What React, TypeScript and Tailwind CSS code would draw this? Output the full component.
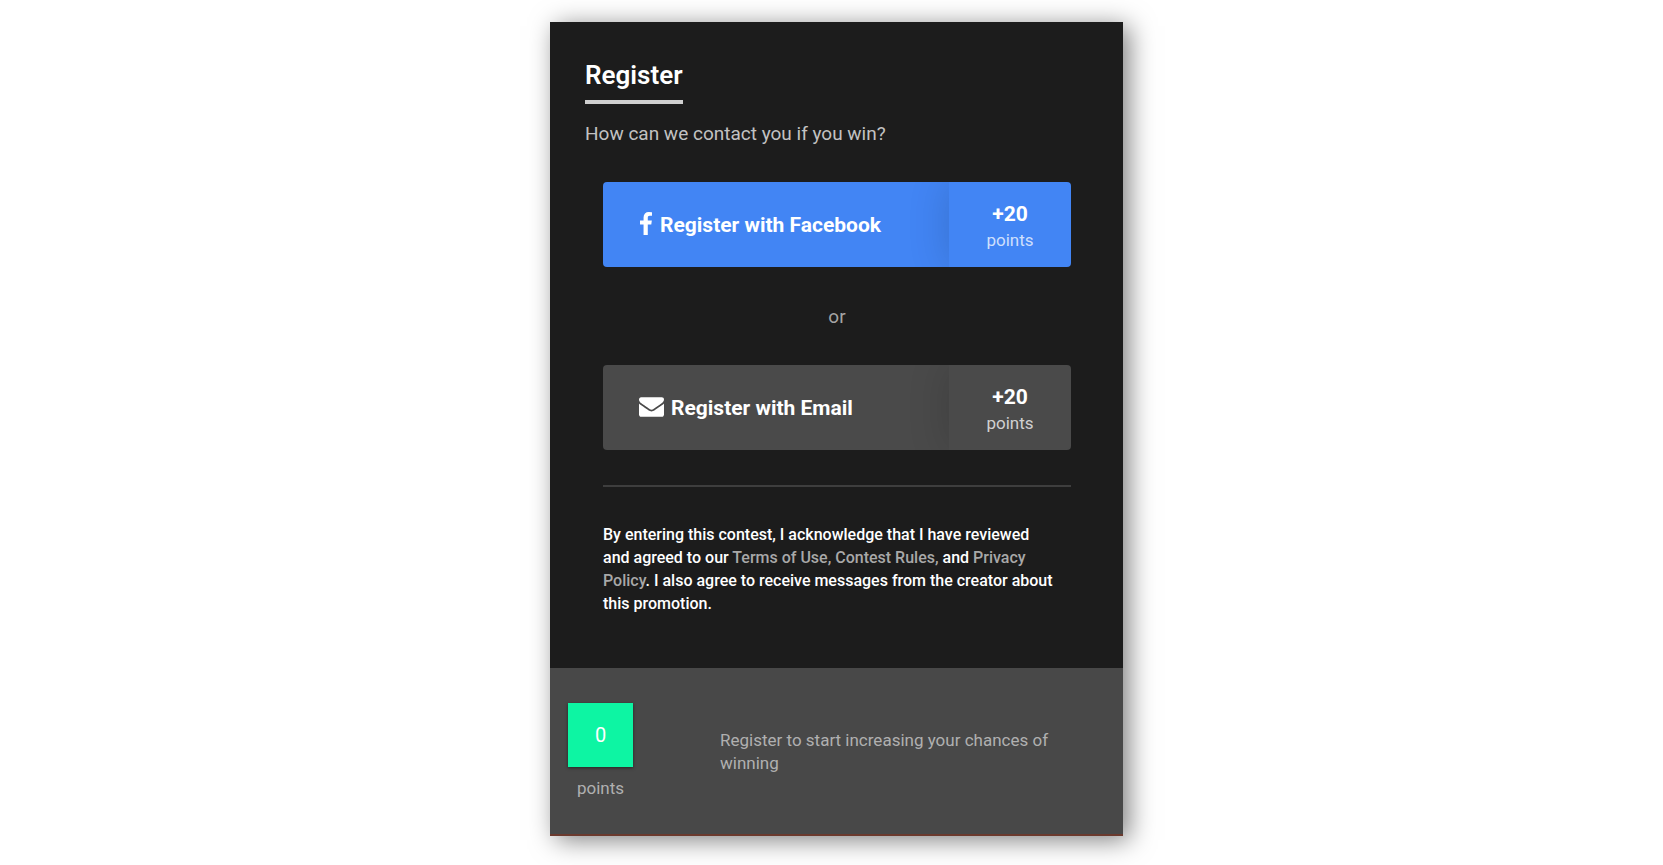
import type { ReactNode } from 'react'

function FacebookIcon() {
  return (
    <svg className="mb-1 h-[23px] w-3.5" fill="currentColor" viewBox="95 128 864 1664">
      <path d="M959 140v264H802q-86 0-116 36t-30 108v189h293l-39 296H656v759H350v-759H95V737h255V519q0-186 104-288.500T731 128q147 0 228 12z" />
    </svg>
  )
}

function EnvelopeIcon() {
  return (
    <svg className="mb-1 h-5 w-[25px]" fill="currentColor" viewBox="0 256 1792 1408">
      <path d="M1792 710v794q0 66-47 113t-113 47H160q-66 0-113-47T0 1504V710q44 49 101 87 362 246 497 345 57 42 92 65t95 48 110 25h2q51 0 110-25t95-48 92-65q170-123 498-345 57-39 100-87z" />
      <path d="M1792 416q0 79-49 151t-122 123q-376 261-468 325-10 7-42 31t-54 38-52 32-57 27-50 9h-2q-23 0-50-9t-57-27-52-32-54-38-42-31q-91-64-262-182T174 690q-62-42-117-115T0 438q0-78 41-130t119-52h1472q65 0 112 47t48 113z" />
    </svg>
  )
}

interface RegisterButtonProps {
  icon: ReactNode
  label: string
  points: number
  className: string
}

function RegisterButton({ icon, label, points, className }: RegisterButtonProps) {
  return (
    <button
      type="button"
      className={`flex w-full h-[85px] items-stretch rounded text-left overflow-hidden cursor-pointer ${className}`}
    >
      <span className="flex flex-1 items-center gap-[7px] pt-0.5 pl-9 text-[21px] font-bold text-white">
        {icon}
        {label}
      </span>
      <span className="flex w-[122px] flex-col items-center justify-center pt-1 shadow-[0_0_42px_rgba(0,0,0,0.16)]">
        <span className="text-[21px] leading-[26px] font-bold text-white">+{points}</span>
        <span className="text-[17px] leading-[26px] text-white/75">points</span>
      </span>
    </button>
  )
}

export default function App() {
  return (
    <div className="min-h-screen bg-white pt-[22px] pb-[30px] pl-[10px] font-[Roboto,'Liberation_Sans',sans-serif]">
      <main className="mx-auto w-full max-w-[573px] bg-[#1c1c1c] shadow-[6px_4px_24px_rgba(0,0,0,0.5)]">
        <section className="px-[35px] pt-9 pb-[53px]">
          <h1 className="inline-block border-b-4 border-[#cfcfcf] pb-2 text-[26px] leading-[34px] font-semibold text-white">
            Register
          </h1>
          <p className="mt-[17px] text-[19px] leading-[26px] text-[#c2c2c2]">
            How can we contact you if you win?
          </p>

          <div className="mt-[35px] ml-[18px] mr-[17px]">
            <RegisterButton
              icon={<FacebookIcon />}
              label="Register with Facebook"
              points={20}
              className="bg-[#4285f4]"
            />
            <p className="pt-[37px] pb-[35px] text-center text-[19px] leading-[26px] text-[#a4a4a4]">or</p>
            <RegisterButton
              icon={<EnvelopeIcon />}
              label="Register with Email"
              points={20}
              className="bg-[#4a4a4a]"
            />

            <hr className="mt-[35px] mb-9 border-t-2 border-[#3e3e3e]" />

            <p className="pr-[13px] text-[16px] leading-[23px] font-medium text-white">
              By entering this contest, I acknowledge that I have reviewed and agreed to our{' '}
              <a href="#terms" className="text-[#a8a8a8]">Terms of Use,</a>{' '}
              <a href="#rules" className="text-[#a8a8a8]">Contest Rules,</a> and{' '}
              <a href="#privacy" className="text-[#a8a8a8]">Privacy Policy</a>. I also agree to receive
              messages from the creator about this promotion.
            </p>
          </div>
        </section>

        <footer className="flex items-center border-b-2 border-[#6b3a2e] bg-[#484848] pt-[35px] pb-[34px] pl-[18px] pr-[70px] text-[17px] leading-[23px] text-[#b0b0b0]">
          <div className="flex w-[65px] flex-col items-center">
            <span className="flex h-16 w-full items-center justify-center bg-[#0df5a3] text-[20px] text-white shadow-[0_1px_3px_rgba(0,0,0,0.5)]">
              0
            </span>
            <span className="mt-[10px]">points</span>
          </div>
          <p className="ml-[87px] flex-1">Register to start increasing your chances of winning</p>
        </footer>
      </main>
    </div>
  )
}
